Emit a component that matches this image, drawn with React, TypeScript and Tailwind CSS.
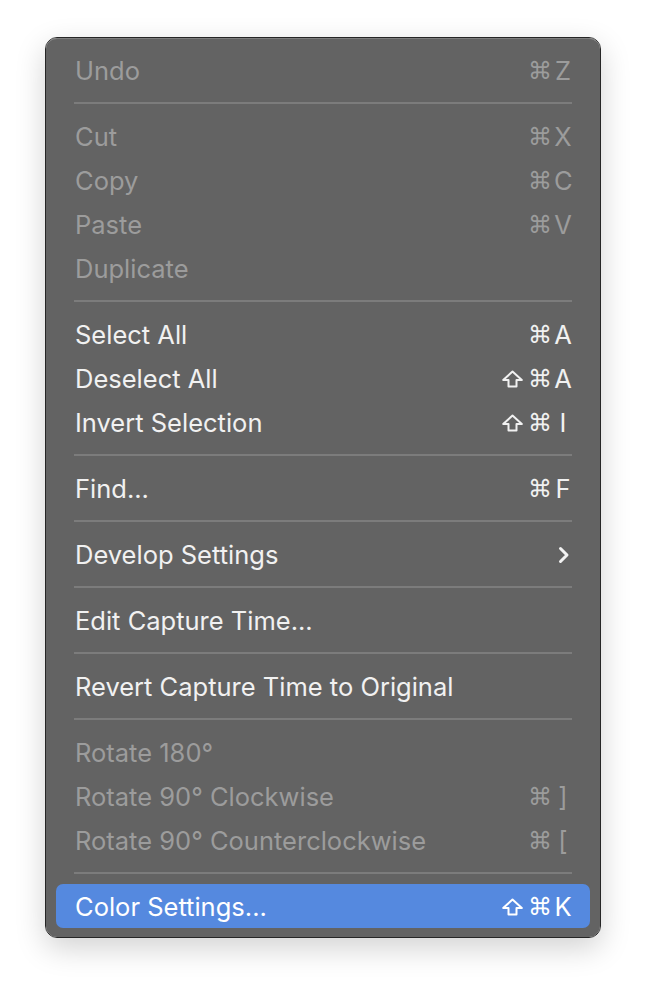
import React from "react";

type Item = {
  label: string;
  mods?: string;
  keyChar?: string;
  disabled?: boolean;
  submenu?: boolean;
  active?: boolean;
};

type Entry = Item | "sep";

const entries: Entry[] = [
  { label: "Undo", mods: "⌘", keyChar: "Z", disabled: true },
  "sep",
  { label: "Cut", mods: "⌘", keyChar: "X", disabled: true },
  { label: "Copy", mods: "⌘", keyChar: "C", disabled: true },
  { label: "Paste", mods: "⌘", keyChar: "V", disabled: true },
  { label: "Duplicate", disabled: true },
  "sep",
  { label: "Select All", mods: "⌘", keyChar: "A" },
  { label: "Deselect All", mods: "⇧⌘", keyChar: "A" },
  { label: "Invert Selection", mods: "⇧⌘", keyChar: "I" },
  "sep",
  { label: "Find...", mods: "⌘", keyChar: "F" },
  "sep",
  { label: "Develop Settings", submenu: true },
  "sep",
  { label: "Edit Capture Time..." },
  "sep",
  { label: "Revert Capture Time to Original" },
  "sep",
  { label: "Rotate 180°", disabled: true },
  { label: "Rotate 90° Clockwise", mods: "⌘", keyChar: "]", disabled: true },
  { label: "Rotate 90° Counterclockwise", mods: "⌘", keyChar: "[", disabled: true },
  "sep",
  { label: "Color Settings...", mods: "⇧⌘", keyChar: "K", active: true },
];

const Chevron = () => (
  <svg width="12" height="18" viewBox="0 0 12 18" fill="none" className="mr-[2px]">
    <path d="M2.5 2.5 L9 9 L2.5 15.5" stroke="#f2f2f2" strokeWidth="3" strokeLinecap="round" strokeLinejoin="round" />
  </svg>
);

// outline shift arrow, the font one is too thin
const ShiftIcon = () => (
  <svg width="21" height="18" viewBox="0 0 21 18" fill="none">
    <path
      d="M10.5 1.5 L19.8 10 H14.5 V16.5 H6.5 V10 H1.2 Z"
      stroke="currentColor"
      strokeWidth="2"
      strokeLinejoin="round"
    />
  </svg>
);

const Shortcut = ({ mods, keyChar }: { mods: string; keyChar: string }) => (
  <div className="flex items-center">
    {mods.split("").map((m, i) =>
      m === "⇧" ? (
        <span key={i} className="flex w-[26px] justify-center pr-[5px]">
          <ShiftIcon />
        </span>
      ) : (
        <span key={i} className="w-[26px] pr-[5px] text-center font-['DejaVu_Sans',sans-serif] text-[24px]">
          {m}
        </span>
      )
    )}
    <span className="w-[18px] text-center">{keyChar}</span>
  </div>
);

const MenuRow = ({ item }: { item: Item }) => {
  const color = item.active
    ? "bg-[#5589df] text-white rounded-[7px]"
    : item.disabled
      ? "text-[#9c9c9c]"
      : "text-[#f1f1f1]";
  return (
    <div className={`flex h-[44px] items-center justify-between pt-[2px] pl-[19px] pr-[18px] ${color}`}>
      <span>{item.label}</span>
      {item.submenu ? <Chevron /> : null}
      {item.mods && item.keyChar ? <Shortcut mods={item.mods} keyChar={item.keyChar} /> : null}
    </div>
  );
};

export default function App() {
  return (
    <div className="min-h-[992px] w-[646px] bg-white pt-[37px] pl-[45px]">
      <div className="w-[556px] rounded-[12px] border border-[#262626] shadow-[0_10px_30px_rgba(0,0,0,0.18)]">
        <div className="rounded-[11px] border-t border-[#7e7e7e] bg-[#636363] px-[10px] pt-[9px] pb-[9px] font-['Inter',sans-serif] text-[25.5px] leading-none">
          {entries.map((e, i) =>
            e === "sep" ? (
              <div key={i} className="flex h-[22px] items-center px-[18px]">
                <div className="h-[2px] w-full bg-[#7c7c7c]" />
              </div>
            ) : (
              <MenuRow key={i} item={e} />
            )
          )}
        </div>
      </div>
    </div>
  );
}
